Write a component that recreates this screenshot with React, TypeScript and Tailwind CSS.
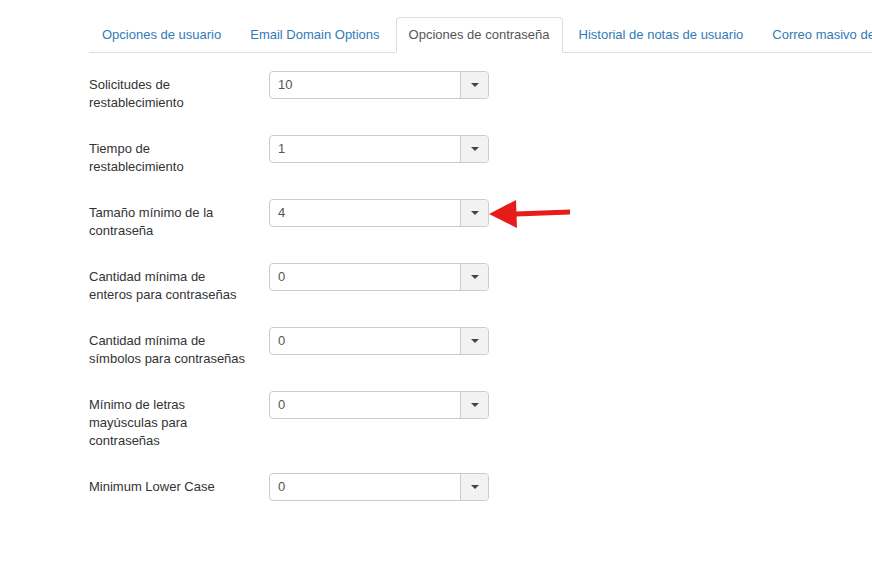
import React from "react";

const tabs = [
  { label: "Opciones de usuario" },
  { label: "Email Domain Options" },
  { label: "Opciones de contraseña", active: true },
  { label: "Historial de notas de usuario" },
  { label: "Correo masivo de usuarios" },
];

const fields: { label: string[]; value: string }[] = [
  { label: ["Solicitudes de", "restablecimiento"], value: "10" },
  { label: ["Tiempo de", "restablecimiento"], value: "1" },
  { label: ["Tamaño mínimo de la", "contraseña"], value: "4" },
  { label: ["Cantidad mínima de", "enteros para contraseñas"], value: "0" },
  { label: ["Cantidad mínima de", "símbolos para contraseñas"], value: "0" },
  { label: ["Mínimo de letras", "mayúsculas para", "contraseñas"], value: "0" },
  { label: ["Minimum Lower Case"], value: "0" },
];

function SelectBox({ value }: { value: string }) {
  return (
    <div className="flex h-[28px] w-[220px] rounded-[4px] border border-[#cccccc] bg-white overflow-hidden">
      <div className="flex-1 pl-[8px] leading-[26px] text-[13px] text-[#555555]">
        {value}
      </div>
      <div className="flex w-[28px] items-center justify-center border-l border-[#cccccc] bg-[#f2f2f2]">
        <span className="block h-0 w-0 border-l-[4px] border-r-[4px] border-t-[4px] border-l-transparent border-r-transparent border-t-[#444444]" />
      </div>
    </div>
  );
}

export default function App() {
  return (
    <div
      className="relative h-[581px] w-[872px] overflow-hidden bg-white text-[#333333]"
      style={{ fontFamily: '"Liberation Sans", Arial, Helvetica, sans-serif' }}
    >
      <div className="pl-[89px] pt-[17px]">
        <ul className="flex whitespace-nowrap border-b border-[#dddddd] text-[13px] leading-[18px]">
          {tabs.map((t) => (
            <li
              key={t.label}
              className={
                t.active
                  ? "mr-[3px] mb-[-1px] rounded-t-[4px] border border-[#dddddd] border-b-white bg-white px-[12px] py-[8px] text-[#555555]"
                  : "mr-[3px] mb-[-1px] border border-transparent px-[12px] py-[8px] text-[#337ab7]"
              }
            >
              {t.label}
            </li>
          ))}
        </ul>

        <div className="mt-[18px] flex flex-col gap-[23px]">
          {fields.map((f, i) => (
            <div key={i} className="flex items-start">
              <div className="w-[180px] whitespace-nowrap pt-[5px] text-[13px] leading-[18px] text-[#333333]">
                {f.label.map((line, j) => (
                  <div key={j}>{line}</div>
                ))}
              </div>
              <SelectBox value={f.value} />
            </div>
          ))}
        </div>
      </div>

      {/* red pointer arrow */}
      <svg
        className="absolute left-[480px] top-[190px]"
        width="100"
        height="45"
        viewBox="0 0 100 45"
      >
        <polygon points="36,21.5 90,19.5 90,24.5 36,26.5" fill="#e81b1b" />
        <polygon points="9,24 36,10 37,38" fill="#e81b1b" />
      </svg>
    </div>
  );
}
